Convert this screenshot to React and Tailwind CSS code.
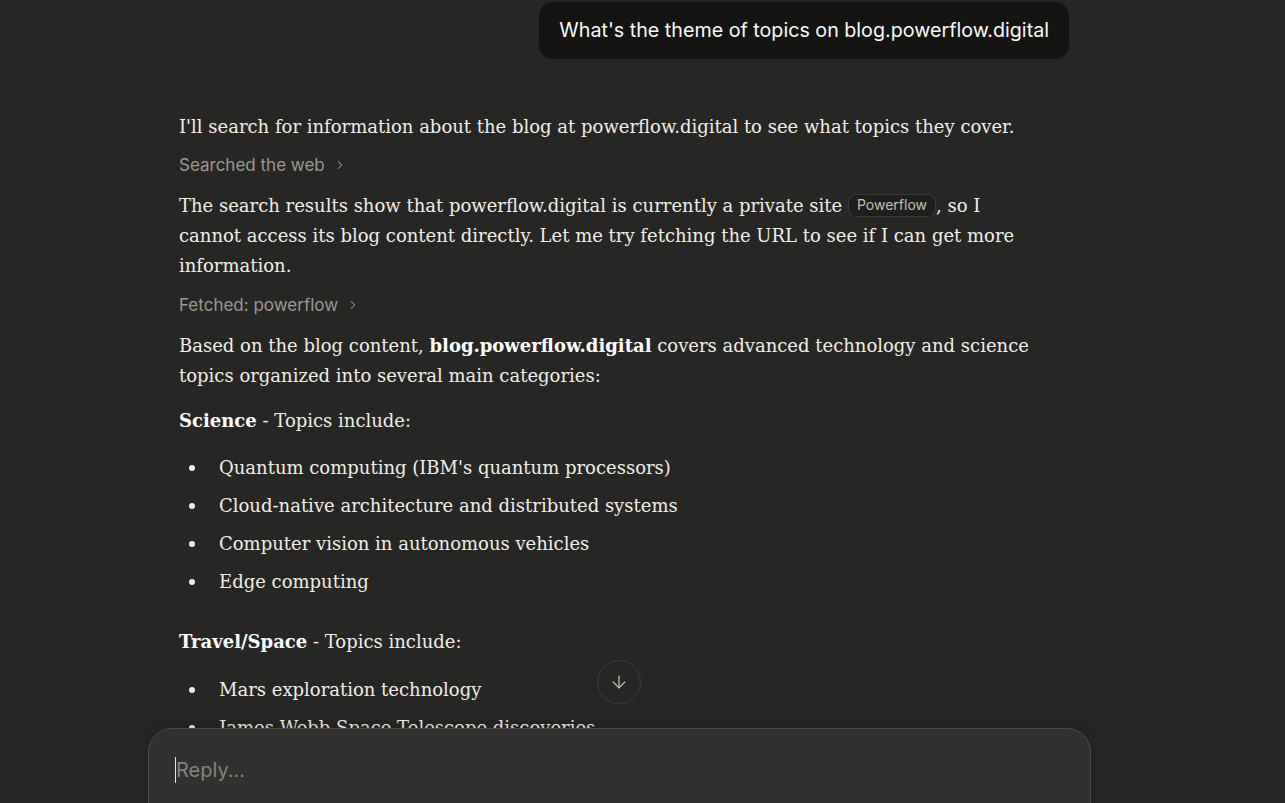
import React from "react";
import { ChevronRight, ArrowDown } from "lucide-react";

const serif = { fontFamily: '"DejaVu Serif", "Liberation Serif", serif' };

const StepLink = ({ label }) => (
  <div className="flex items-center h-[24px] text-[17px] text-[#9c9a92] font-['Inter',sans-serif]">
    <span>{label}</span>
    <ChevronRight size={14} strokeWidth={1.75} className="ml-[8px]" />
  </div>
);

const Bullet = ({ children }) => (
  <li className="flex items-center h-[38px]">
    <span className="w-[6px] h-[6px] rounded-full bg-[#f0eee6] ml-[10px] mr-[24px]" />
    <span>{children}</span>
  </li>
);

const App = () => {
  return (
    <div className="relative h-[803px] w-full overflow-hidden bg-[#262624]">
      <div className="pl-[179px] pt-[2px] w-[1069px]">
        <div className="flex justify-end">
          <div className="rounded-[14px] bg-[#141413] px-[20px] h-[57px] flex items-center pt-[1px] text-[19.7px] text-[#faf9f5] font-['Inter',sans-serif]">
            What's the theme of topics on blog.powerflow.digital
          </div>
        </div>

        <div className="mt-[53px] w-[860px] text-[18px] leading-[30px] text-[#f0eee6]" style={serif}>
          <p>I'll search for information about the blog at powerflow.digital to see what topics they cover.</p>
          <div className="mt-[11px]">
            <StepLink label="Searched the web" />
          </div>
          <p className="mt-[14px]">
            The search results show that powerflow.digital is currently a private site{" "}
            <span className="inline-flex items-center align-middle h-[23px] px-[8px] rounded-[8px] border border-[#3a3936] bg-[#1f1e1d] text-[14px] leading-none text-[#c2c0b6] font-['Inter',sans-serif] -mt-[4px]">
              Powerflow
            </span>
            , so I cannot access its blog content directly. Let me try fetching the URL to see if I can get more information.
          </p>
          <div className="mt-[12px]">
            <StepLink label="Fetched: powerflow" />
          </div>
          <p className="mt-[14px]">
            Based on the blog content, <strong className="font-bold text-white">blog.powerflow.digital</strong> covers advanced technology and science topics organized into several main categories:
          </p>
          <p className="mt-[15px]">
            <strong className="font-bold text-white">Science</strong> - Topics include:
          </p>
          <ul className="mt-[13px]">
            <Bullet>Quantum computing (IBM's quantum processors)</Bullet>
            <Bullet>Cloud-native architecture and distributed systems</Bullet>
            <Bullet>Computer vision in autonomous vehicles</Bullet>
            <Bullet>Edge computing</Bullet>
          </ul>
          <p className="mt-[26px]">
            <strong className="font-bold text-white">Travel/Space</strong> - Topics include:
          </p>
          <ul className="mt-[14px]">
            <Bullet>Mars exploration technology</Bullet>
            <Bullet>James Webb Space Telescope discoveries</Bullet>
            <Bullet>Sustainable travel innovations</Bullet>
          </ul>
        </div>
      </div>

      <button className="absolute left-[597px] top-[660px] w-[44px] h-[44px] rounded-full border border-[#3d3c39] bg-[#262624] flex items-center justify-center text-[#c2c0b6]">
        <ArrowDown size={20} strokeWidth={1.5} />
      </button>

      <div className="absolute left-[148px] top-[728px] w-[943px] h-[120px] rounded-[24px] border border-[#4a4945] bg-[#30302e] shadow-[0_-4px_16px_rgba(0,0,0,0.15)]">
        <div className="flex items-center pl-[26px] pt-[27px] text-[20px] leading-[28px] font-['Inter',sans-serif]">
          <span className="w-px h-[26px] bg-[#e8e6dc]" />
          <span className="text-[#85837c]">Reply...</span>
        </div>
      </div>
    </div>
  );
};

export default App;
